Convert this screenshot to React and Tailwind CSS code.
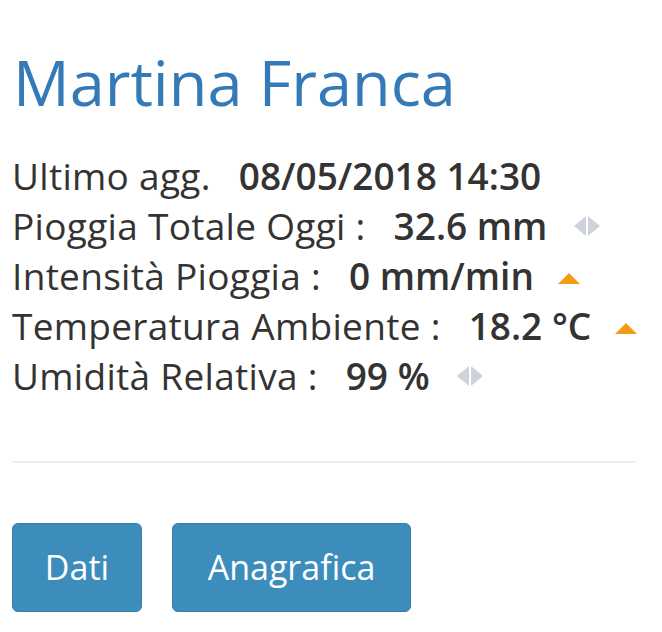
import React from "react";

const rows = [
  { label: "Ultimo agg.", value: "08/05/2018 14:30", trend: null },
  { label: "Pioggia Totale Oggi :", value: "32.6 mm", trend: "flat" },
  { label: "Intensità Pioggia :", value: "0 mm/min", trend: "up" },
  { label: "Temperatura Ambiente :", value: "18.2 °C", trend: "up" },
  { label: "Umidità Relativa :", value: "99 %", trend: "flat" },
];

const TrendIcon = ({ trend }) => {
  if (trend === "up") {
    return (
      <svg width="22" height="11" viewBox="0 0 22 11" className="flex-none ml-[24px] mt-[4px]">
        <polygon points="11,0 22,11 0,11" fill="#f39c12" />
      </svg>
    );
  }
  return (
    <svg width="26" height="20" viewBox="0 0 26 20" className="flex-none ml-[27px]">
      <polygon points="12,0 12,20 0,10" fill="#cdd2db" />
      <polygon points="14,0 14,20 26,10" fill="#cdd2db" />
    </svg>
  );
};

export default function App() {
  return (
    <div className="w-[662px] h-[632px] bg-white px-[12px] pt-[40px] text-[#333] font-['Open_Sans',sans-serif]">
      <h1 className="text-[#337ab7] text-[63px] leading-[84px] pl-[1px]">Martina Franca</h1>

      <div className="mt-[27px] flex flex-col text-[37px] tracking-[0.3px]">
        {rows.map((r) => (
          <div key={r.label} className="flex items-center h-[50px]">
            <span>{r.label}</span>
            <span className="font-semibold ml-[28px] tracking-normal">{r.value}</span>
            {r.trend && <TrendIcon trend={r.trend} />}
          </div>
        ))}
      </div>

      <hr className="mt-[60px] w-[624px] border-t-2 border-[#eee]" />

      <div className="mt-[60px] flex gap-[30px]">
        <button className="w-[130px] h-[89px] rounded-[6px] bg-[#3c8dbc] border border-[#367fa9] text-white text-[34px]">
          Dati
        </button>
        <button className="w-[239px] h-[89px] rounded-[6px] bg-[#3c8dbc] border border-[#367fa9] text-white text-[34px]">
          Anagrafica
        </button>
      </div>
    </div>
  );
}
